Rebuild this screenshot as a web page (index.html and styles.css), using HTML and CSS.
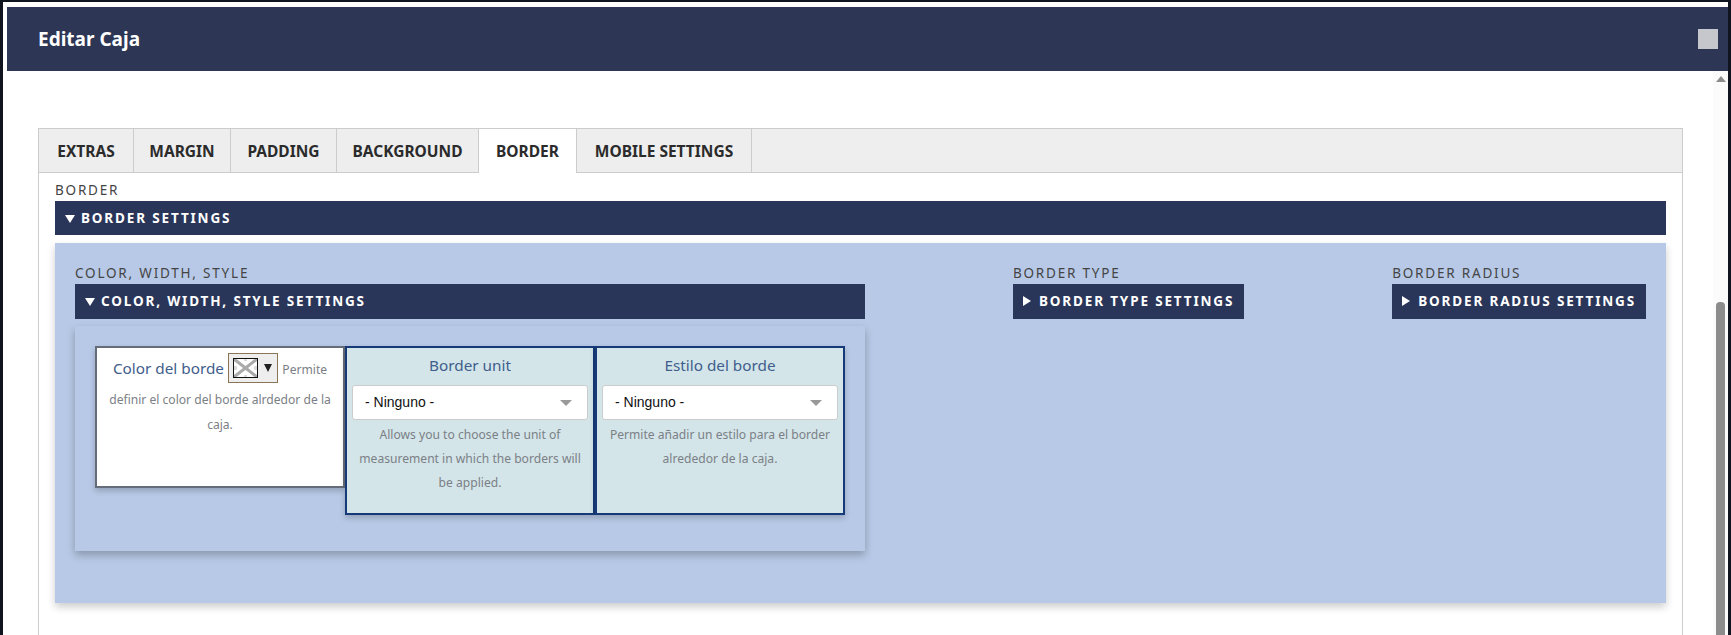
FILE: index.html
```html
<!DOCTYPE html>
<html lang="es">
<head>
    <meta charset="UTF-8">
    <title>Editar Caja</title>
    <link rel="stylesheet" href="styles.css">
</head>
<body>

<div class="modal">
    <div class="modal-header">
        <span class="modal-title">Editar Caja</span>
        <span class="modal-close"></span>
    </div>
    <div class="modal-body">
        <div class="modal-content">
            <div class="tabs">
                <div class="tab-bar">
                    <div class="tab">EXTRAS</div>
                    <div class="tab">MARGIN</div>
                    <div class="tab">PADDING</div>
                    <div class="tab">BACKGROUND</div>
                    <div class="tab active">BORDER</div>
                    <div class="tab">MOBILE SETTINGS</div>
                </div>
                <div class="tab-content">
                    <div class="field-label">BORDER</div>
                    <div class="section-head section-top"><span class="arrow-down"></span>BORDER SETTINGS</div>
                    <div class="panel">
                        <div class="col">
                            <div class="field-label">COLOR, WIDTH, STYLE</div>
                            <div class="section-head"><span class="arrow-down"></span>COLOR, WIDTH, STYLE SETTINGS</div>
                            <div class="inner-panel">
                                <div class="cards">
                                    <div class="card card-white">
                                        <span class="card-title">Color del borde</span>
                                        <span class="swatch-btn">
                                            <span class="swatch">
                                                <svg width="23" height="18" viewBox="0 0 23 18">
                                                    <path d="M0 7h3v4H0zM20 7h3v4h-3zM10 0h3v2h-3zM10 16h3v2h-3z" fill="#dcdcdc"/>
                                                    <path d="M0 0 23 18M23 0 0 18" stroke="#aaa" stroke-width="3" fill="none"/>
                                                </svg>
                                            </span>
                                            <span class="swatch-arrow"></span>
                                        </span>
                                        <span class="card-text">Permite definir el color del borde alrdedor de la caja.</span>
                                    </div>
                                    <div class="card">
                                        <div class="card-title">Border unit</div>
                                        <div class="select">- Ninguno -<span class="select-arrow"></span></div>
                                        <div class="card-text card-note">Allows you to choose the unit of measurement in which the borders will be applied.</div>
                                    </div>
                                    <div class="card">
                                        <div class="card-title">Estilo del borde</div>
                                        <div class="select">- Ninguno -<span class="select-arrow"></span></div>
                                        <div class="card-text card-note">Permite añadir un estilo para el border alrededor de la caja.</div>
                                    </div>
                                </div>
                            </div>
                        </div>
                        <div class="col">
                            <div class="field-label">BORDER TYPE</div>
                            <div class="section-head"><span class="arrow-right"></span>BORDER TYPE SETTINGS</div>
                        </div>
                        <div class="col">
                            <div class="field-label">BORDER RADIUS</div>
                            <div class="section-head"><span class="arrow-right"></span>BORDER RADIUS SETTINGS</div>
                        </div>
                    </div>
                </div>
            </div>
        </div>
        <div class="scrollbar">
            <div class="scroll-up"></div>
            <div class="scroll-thumb"></div>
        </div>
    </div>
</div>

</body>
</html>
```

FILE: styles.css
```css
html, body {
    height: 100%;
}
body {
    margin: 0;
    padding: 2px 3px 0 3px;
    box-sizing: border-box;
    overflow: hidden;
    background-color: #10141f;
    font-family: "Noto Sans", Roboto, sans-serif;
}
.modal {
    background-color: white;
    padding: 5px 0 0 4px;
    height: 100%;
    box-sizing: border-box;
    display: flex;
    flex-direction: column;
}
.modal-header {
    background-color: #2d3654;
    height: 64px;
    flex: none;
    display: flex;
    align-items: center;
    justify-content: space-between;
    padding: 0 10px 0 31px;
}
.modal-title {
    color: white;
    font-size: 19px;
    font-weight: bold;
}
.modal-close {
    width: 20px;
    height: 20px;
    background-color: #c6c7cc;
}
.modal-body {
    flex: 1;
    display: flex;
    min-height: 0;
}
.modal-content {
    flex: 1;
    padding: 57px 30px 0 31px;
}
.tabs {
    border: 1px solid #ccc;
    border-bottom: none;
    height: 100%;
    box-sizing: border-box;
}
.tab-bar {
    display: grid;
    grid-template-columns: 95px 97px 106px 142px 98px 175px 1fr;
    height: 43px;
    background-color: #eee;
    border-bottom: 1px solid #ccc;
}
.tab {
    height: 43px;
    line-height: 45px;
    text-align: center;
    font-size: 15.5px;
    font-weight: bold;
    color: #2b2b2b;
    border-right: 1px solid #ccc;
}
.tab.active {
    background-color: white;
    height: 44px;
}
.tab-content {
    padding: 9px 16px 0 16px;
}
.field-label {
    font-size: 13.5px;
    line-height: 16px;
    letter-spacing: 1.8px;
    color: #444;
    white-space: nowrap;
}
.section-head {
    background-color: #2a3659;
    color: white;
    font-size: 13.5px;
    font-weight: bold;
    letter-spacing: 1.85px;
    height: 35px;
    line-height: 35px;
    padding: 0 10px;
    margin-top: 3px;
    white-space: nowrap;
}
.section-top {
    height: 34px;
    line-height: 34px;
}
.arrow-down {
    display: inline-block;
    border-left: 5px solid transparent;
    border-right: 5px solid transparent;
    border-top: 8px solid white;
    margin-right: 6px;
}
.arrow-right {
    display: inline-block;
    border-top: 5px solid transparent;
    border-bottom: 5px solid transparent;
    border-left: 8px solid white;
    margin-right: 8px;
}
.panel {
    margin-top: 8px;
    height: 360px;
    padding: 22px 20px 0 20px;
    box-sizing: border-box;
    background-color: #b7c9e6;
    box-shadow: 0 4px 8px rgba(0, 0, 0, 0.2);
    display: flex;
    justify-content: space-between;
    align-items: flex-start;
}
.inner-panel {
    margin-top: 7px;
    height: 225px;
    padding: 20px;
    box-sizing: border-box;
    background-color: #b7c9e6;
    box-shadow: 0 4px 8px rgba(0, 0, 0, 0.25);
}
.cards {
    display: flex;
    align-items: flex-start;
}
.card {
    width: 250px;
    height: 169px;
    box-sizing: border-box;
    border: 2px solid #163a78;
    background-color: #d3e5e9;
    padding: 5px 5px 0 5px;
    text-align: center;
    box-shadow: 0 3px 6px rgba(0, 0, 0, 0.2);
}
.card-white {
    height: 142px;
    border-color: #666d7a;
    background-color: white;
    padding: 5px 10px 0 10px;
}
.card-title {
    font-size: 15.3px;
    line-height: 24px;
    color: #3f5e8c;
}
.card-text {
    font-size: 12.1px;
    line-height: 24px;
    color: #7b8086;
}
.card-note {
    margin-top: 3px;
}
.select {
    position: relative;
    margin-top: 8px;
    height: 35px;
    line-height: 33px;
    box-sizing: border-box;
    border: 1px solid #ccc;
    border-radius: 3px;
    background-color: white;
    padding-left: 12px;
    text-align: left;
    font-family: "Liberation Sans", sans-serif;
    font-size: 14px;
    color: #111;
}
.select-arrow {
    position: absolute;
    right: 15px;
    top: 14px;
    border-left: 6px solid transparent;
    border-right: 6px solid transparent;
    border-top: 6px solid #999;
}
.swatch-btn {
    display: inline-flex;
    align-items: center;
    width: 50px;
    height: 30px;
    box-sizing: border-box;
    border: 1px solid #8b7355;
    background-color: #eee;
    padding-left: 4px;
    margin-bottom: 4px;
    vertical-align: middle;
}
.swatch {
    display: block;
    width: 25px;
    height: 20px;
    box-sizing: border-box;
    border: 1px solid #111;
    background-color: white;
}
.swatch svg {
    display: block;
}
.swatch-arrow {
    border-left: 4px solid transparent;
    border-right: 4px solid transparent;
    border-top: 8px solid #222;
    margin-left: 6px;
}
.scrollbar {
    flex: none;
    width: 15px;
    background-color: #fbfbfb;
    position: relative;
}
.scroll-up {
    position: absolute;
    left: 3px;
    top: 5px;
    border-left: 5px solid transparent;
    border-right: 5px solid transparent;
    border-bottom: 6px solid #8c8c8c;
}
.scroll-thumb {
    position: absolute;
    left: 3px;
    top: 231px;
    bottom: 0;
    width: 9px;
    border-radius: 4px 4px 0 0;
    background-color: #8c8c8c;
}
```
